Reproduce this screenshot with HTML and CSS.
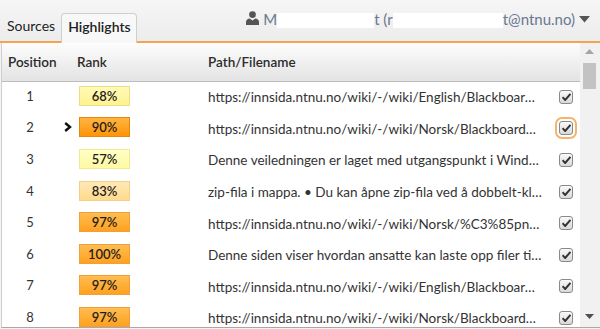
FILE: index.html
```html
<!DOCTYPE html>
<html lang="no">
<head>
    <meta charset="UTF-8">
    <title>Highlights</title>
    <link rel="stylesheet" href="styles.css">
</head>
<body>
    <div class="topbar">
        <div class="tabs">
            <div class="tab">Sources</div>
            <div class="tab active">Highlights</div>
        </div>
        <div class="user">
            <svg class="user-icon" width="13" height="14" viewBox="0 0 13 14">
                <circle cx="6.5" cy="3.6" r="3.4" fill="#555"/>
                <path d="M0 14 V11 C0 8.6 2 7.4 3.6 7.4 L6.5 9.4 L9.4 7.4 C11 7.4 13 8.6 13 11 V14 Z" fill="#555"/>
            </svg>
            <span class="user-name">M<span class="redact r1"></span>t (r<span class="redact r2"></span>t@ntnu.no)</span>
            <svg class="caret" width="11" height="7" viewBox="0 0 11 7">
                <path d="M0 0 H11 L5.5 6.5 Z" fill="#555"/>
            </svg>
        </div>
    </div>

    <div class="panel">
        <div class="table">
            <div class="thead">
                <div class="th-pos">Position</div>
                <div>Rank</div>
                <div>Path/Filename</div>
            </div>

            <div class="row">
                <div class="pos">1</div>
                <div class="arrow"></div>
                <div class="rank rank-68">68%</div>
                <div></div>
                <div class="path">https://innsida.ntnu.no/wiki/-/wiki/English/Blackboar…</div>
                <div class="check"><span class="box"><svg width="9" height="8" viewBox="0 0 9 8"><path d="M0.5 4.2 L3.2 7 L8.5 0.8" stroke="#333" stroke-width="2" fill="none"/></svg></span></div>
            </div>
            <div class="row">
                <div class="pos">2</div>
                <div class="arrow">
                    <svg width="8" height="10" viewBox="0 0 8 10"><path d="M1.2 1 L6 5 L1.2 9" stroke="#111" stroke-width="2.4" fill="none"/></svg>
                </div>
                <div class="rank rank-90">90%</div>
                <div></div>
                <div class="path">https://innsida.ntnu.no/wiki/-/wiki/Norsk/Blackboard…</div>
                <div class="check"><span class="box focused"><svg width="9" height="8" viewBox="0 0 9 8"><path d="M0.5 4.2 L3.2 7 L8.5 0.8" stroke="#333" stroke-width="2" fill="none"/></svg></span></div>
            </div>
            <div class="row">
                <div class="pos">3</div>
                <div class="arrow"></div>
                <div class="rank rank-57">57%</div>
                <div></div>
                <div class="path">Denne veiledningen er laget med utgangspunkt i Wind…</div>
                <div class="check"><span class="box"><svg width="9" height="8" viewBox="0 0 9 8"><path d="M0.5 4.2 L3.2 7 L8.5 0.8" stroke="#333" stroke-width="2" fill="none"/></svg></span></div>
            </div>
            <div class="row">
                <div class="pos">4</div>
                <div class="arrow"></div>
                <div class="rank rank-83">83%</div>
                <div></div>
                <div class="path">zip-fila i mappa. • Du kan åpne zip-fila ved å dobbelt-kl…</div>
                <div class="check"><span class="box"><svg width="9" height="8" viewBox="0 0 9 8"><path d="M0.5 4.2 L3.2 7 L8.5 0.8" stroke="#333" stroke-width="2" fill="none"/></svg></span></div>
            </div>
            <div class="row">
                <div class="pos">5</div>
                <div class="arrow"></div>
                <div class="rank rank-97">97%</div>
                <div></div>
                <div class="path">https://innsida.ntnu.no/wiki/-/wiki/Norsk/%C3%85pn…</div>
                <div class="check"><span class="box"><svg width="9" height="8" viewBox="0 0 9 8"><path d="M0.5 4.2 L3.2 7 L8.5 0.8" stroke="#333" stroke-width="2" fill="none"/></svg></span></div>
            </div>
            <div class="row">
                <div class="pos">6</div>
                <div class="arrow"></div>
                <div class="rank rank-97">100%</div>
                <div></div>
                <div class="path">Denne siden viser hvordan ansatte kan laste opp filer ti…</div>
                <div class="check"><span class="box"><svg width="9" height="8" viewBox="0 0 9 8"><path d="M0.5 4.2 L3.2 7 L8.5 0.8" stroke="#333" stroke-width="2" fill="none"/></svg></span></div>
            </div>
            <div class="row">
                <div class="pos">7</div>
                <div class="arrow"></div>
                <div class="rank rank-97">97%</div>
                <div></div>
                <div class="path">https://innsida.ntnu.no/wiki/-/wiki/English/Blackboar…</div>
                <div class="check"><span class="box"><svg width="9" height="8" viewBox="0 0 9 8"><path d="M0.5 4.2 L3.2 7 L8.5 0.8" stroke="#333" stroke-width="2" fill="none"/></svg></span></div>
            </div>
            <div class="row">
                <div class="pos">8</div>
                <div class="arrow"></div>
                <div class="rank rank-97">97%</div>
                <div></div>
                <div class="path">https://innsida.ntnu.no/wiki/-/wiki/Norsk/Blackboard…</div>
                <div class="check"><span class="box"><svg width="9" height="8" viewBox="0 0 9 8"><path d="M0.5 4.2 L3.2 7 L8.5 0.8" stroke="#333" stroke-width="2" fill="none"/></svg></span></div>
            </div>
        </div>

        <div class="scrollbar">
            <svg class="sb-up" width="9" height="5" viewBox="0 0 9 5"><path d="M0 5 L4.5 0 L9 5 Z" fill="#a5a5a5"/></svg>
            <div class="thumb"></div>
            <svg class="sb-down" width="9" height="5" viewBox="0 0 9 5"><path d="M0 0 H9 L4.5 5 Z" fill="#505050"/></svg>
        </div>
    </div>
</body>
</html>
```

FILE: styles.css
```css
/* Base */
body {
    margin: 0;
    background: #f3f3f3;
    color: #333;
    font-family: 'Lato', 'Liberation Sans', sans-serif;
    font-size: 13px;
    height: 329px;
    overflow: hidden;
}

/* Top bar with tabs and user menu */
.topbar {
    display: flex;
    align-items: flex-end;
    height: 41px;
    background: linear-gradient(#f6f6f6, #ececec);
    border-bottom: 2px solid #f5a34c;
}

.tabs {
    display: flex;
    align-items: flex-end;
}

.tab {
    font-size: 14px;
    color: #222;
    padding: 0 6px 0 7px;
    height: 28px;
    line-height: 26px;
}

.tab.active {
    background: #f8f8f8;
    border: 1px solid #cfcfcf;
    border-bottom: none;
    border-radius: 4px 4px 0 0;
    margin-bottom: -2px;
    height: 29px;
    padding: 0 5px 0 6px;
    font-weight: 600;
}

.user {
    margin-left: auto;
    align-self: flex-start;
    display: flex;
    align-items: center;
    height: 37px;
    padding-right: 10px;
    color: #6b7891;
    font-size: 15px;
}

.user-icon {
    margin-right: 4px;
    margin-top: -1px;
}

.redact {
    display: inline-block;
    background: #fff;
    height: 15px;
    vertical-align: -3px;
}

.r1 { width: 97px; }
.r2 { width: 110px; }

.caret {
    margin-left: 4px;
    margin-top: 1px;
}

/* Results panel */
.panel {
    display: flex;
    height: 284px;
    margin-left: 1px;
    border-left: 1px solid #cfcfcf;
    border-bottom: 1px solid #a8a8a8;
    background: #fff;
}

.table {
    flex: 1;
    overflow: hidden;
}

.thead {
    display: grid;
    grid-template-columns: 75px 131px 1fr;
    align-items: center;
    height: 38px;
    background: linear-gradient(#fdfdfd, #e3e3e3);
    border-bottom: 1px solid #bdbdbd;
    font-weight: 600;
    font-size: 13.5px;
    color: #2b2b2b;
}

.th-pos {
    padding-left: 6px;
}

.row {
    display: grid;
    grid-template-columns: 56px 21px 51px 78px 1fr 28px;
    align-items: center;
    height: 31.6px;
    box-sizing: border-box;
    padding-bottom: 4px;
}

.pos {
    text-align: center;
}

.arrow {
    display: flex;
    align-items: center;
    padding-left: 6px;
}

.path {
    white-space: nowrap;
    overflow: hidden;
    padding-top: 3px;
    font-size: 13.5px;
}

/* Rank badges */
.rank {
    height: 20px;
    box-sizing: border-box;
    line-height: 18px;
    text-align: center;
    color: #1e1e1e;
    font-weight: 600;
    border: 1px solid;
}

.rank-57 {
    background: linear-gradient(#ffffc4, #fff9a2);
    border-color: #efe99a;
}

.rank-68 {
    background: linear-gradient(#fffab8, #fff290);
    border-color: #eadf82;
}

.rank-83 {
    background: linear-gradient(#ffe8b6, #ffda8c);
    border-color: #f3cf8c;
}

.rank-90 {
    background: linear-gradient(#ffb443, #ff9406);
    border-color: #e4870f;
}

.rank-97 {
    background: linear-gradient(#ffbd52, #ffa11f);
    border-color: #efa03a;
}

/* Checkboxes */
.check {
    display: flex;
    justify-content: center;
    padding-top: 2px;
}

.box {
    display: flex;
    align-items: center;
    justify-content: center;
    width: 14px;
    height: 14px;
    box-sizing: border-box;
    border: 1px solid #8a8a8a;
    border-radius: 3px;
    background: linear-gradient(#fafafa, #d9d9d9);
}

.box.focused {
    outline: 2px solid #f7b36a;
    outline-offset: 2px;
}

/* Scrollbar */
.scrollbar {
    position: relative;
    width: 20px;
    background: #f1f1f1;
}

.sb-up {
    position: absolute;
    top: 6px;
    left: 5px;
}

.thumb {
    position: absolute;
    top: 20px;
    left: 3px;
    width: 13px;
    height: 26px;
    background: #c3c3c3;
}

.sb-down {
    position: absolute;
    bottom: 8px;
    left: 5px;
}
```
